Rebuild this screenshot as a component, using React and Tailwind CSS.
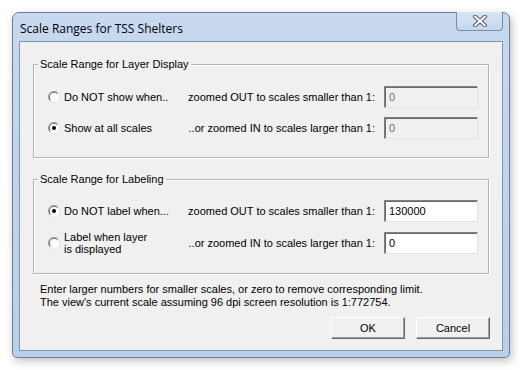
import { useState } from "react";

const FONT = { fontFamily: '"Liberation Sans", Arial, sans-serif' };

function Radio({ checked }) {
  return (
    <svg width="12" height="12" viewBox="0 0 12 12" className="shrink-0">
      <circle cx="6" cy="6" r="5.5" fill="#ffffff" />
      <path d="M10 2 A5.5 5.5 0 0 0 2 10" fill="none" stroke="#a0a0a0" strokeWidth="1" />
      <path d="M9.3 2.7 A4.5 4.5 0 0 0 2.7 9.3" fill="none" stroke="#696969" strokeWidth="1" />
      <path d="M2 10 A5.5 5.5 0 0 0 10 2" fill="none" stroke="#e3e3e3" strokeWidth="1" />
      {checked && <circle cx="6" cy="6" r="2" fill="#000000" />}
    </svg>
  );
}

function ScaleInput({ value, disabled }) {
  return (
    <input
      value={value}
      readOnly
      disabled={disabled}
      className={
        "w-[94px] h-[22px] px-[4px] text-[11px] outline-none border border-t-[#808080] border-l-[#808080] border-r-[#e3e3e3] border-b-[#e3e3e3] shadow-[inset_1px_1px_0_#696969] " +
        (disabled ? "bg-[#f0f0f0] text-[#6d6d6d]" : "bg-white text-black")
      }
      style={FONT}
    />
  );
}

function Row({ checked, label, middle, value, disabled, onPick }) {
  return (
    <div className="flex items-center h-[22px]">
      <label className="flex items-center gap-[4px] w-[140px] cursor-default" onClick={onPick}>
        <Radio checked={checked} />
        <span className="leading-[12px]">{label}</span>
      </label>
      <span className="flex-1 text-right pr-[9px]">{middle}</span>
      <ScaleInput value={value} disabled={disabled} />
    </div>
  );
}

function Group({ title, className, children }) {
  return (
    <fieldset className={"mx-[13px] border border-[#b4b4b4] shadow-[inset_1px_1px_0_#ffffff,1px_1px_0_#ffffff] pl-[14px] pr-[10px] " + className}>
      <legend className="-ml-[10px] px-[2px] leading-[14px]">{title}</legend>
      {children}
    </fieldset>
  );
}

function WinButton({ children }) {
  return (
    <button className="w-[74px] h-[22px] bg-[#f0f0f0] border border-t-white border-l-white border-r-[#696969] border-b-[#696969] shadow-[inset_-1px_-1px_0_#a0a0a0] text-[11px] text-black">
      {children}
    </button>
  );
}

export default function App() {
  const [display, setDisplay] = useState("all");
  const [labeling, setLabeling] = useState("not");

  return (
    <div className="w-[522px] h-[370px] bg-white pt-[12px] pl-[12px]" style={FONT}>
      <div className="w-[498px] h-[346px] rounded-t-[7px] rounded-b-[5px] border border-[#6b7d92] bg-gradient-to-b from-[#c7d8ef] to-[#b9cfea] shadow-[2px_3px_8px_rgba(0,0,0,0.25)] flex flex-col">
        {/* title bar */}
        <div className="h-[28px] flex items-start pl-[7px] pr-[6px] relative">
          <span className="mt-[7px] text-[12px] text-black" style={{ fontFamily: '"Open Sans", "Liberation Sans", sans-serif' }}>
            Scale Ranges for TSS Shelters
          </span>
          <div className="ml-auto w-[47px] h-[19px] -mt-[1px] rounded-b-[4px] border border-t-0 border-[#7c8da3] bg-gradient-to-b from-[#dbe6f4] to-[#c5d6ec] flex items-center justify-center">
            <svg width="16" height="12" viewBox="0 0 16 12">
              <path d="M3 1.5 L13 10.5 M13 1.5 L3 10.5" stroke="#4d5a6a" strokeWidth="4" strokeLinecap="round" />
              <path d="M3 1.5 L13 10.5 M13 1.5 L3 10.5" stroke="#ffffff" strokeWidth="2" strokeLinecap="round" />
            </svg>
          </div>
        </div>

        {/* client area */}
        <div className="mx-[6px] h-[310px] border border-[#8094ad] bg-[#f0f0f0] text-[11px] text-black flex flex-col">
          <Group title="Scale Range for Layer Display" className="mt-[15px] pt-[15px] pb-[18px]">
            <div className="flex flex-col gap-[9px]">
              <Row
                checked={display === "not"}
                label="Do NOT show when.."
                middle="zoomed OUT to scales smaller than 1:"
                value="0"
                disabled={display !== "not"}
                onPick={() => setDisplay("not")}
              />
              <Row
                checked={display === "all"}
                label="Show at all scales"
                middle="..or zoomed IN to scales larger than 1:"
                value="0"
                disabled={display !== "not"}
                onPick={() => setDisplay("all")}
              />
            </div>
          </Group>

          <Group title="Scale Range for Labeling" className="mt-[14px] pt-[14px] pb-[19px]">
            <div className="flex flex-col gap-[10px]">
              <Row
                checked={labeling === "not"}
                label="Do NOT label when..."
                middle="zoomed OUT to scales smaller than 1:"
                value="130000"
                disabled={labeling !== "not"}
                onPick={() => setLabeling("not")}
              />
              <Row
                checked={labeling === "always"}
                label={<>Label when layer<br />is displayed</>}
                middle="..or zoomed IN to scales larger than 1:"
                value="0"
                disabled={labeling !== "not"}
                onPick={() => setLabeling("always")}
              />
            </div>
          </Group>

          <div className="mt-[9px] ml-[20px] leading-[13px]">
            <p>Enter larger numbers for smaller scales, or zero to remove corresponding limit.</p>
            <p>The view's current scale assuming 96 dpi screen resolution is 1:772754.</p>
          </div>

          <div className="mt-[8px] mr-[12px] flex justify-end gap-[11px]">
            <WinButton>OK</WinButton>
            <WinButton>Cancel</WinButton>
          </div>
        </div>
      </div>
    </div>
  );
}
